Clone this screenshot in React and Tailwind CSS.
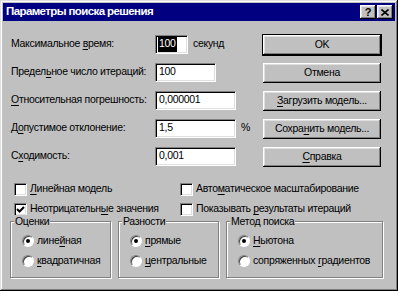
const raised =
  "shadow-[inset_-1px_-1px_0_#000,inset_1px_1px_0_#fff,inset_-2px_-2px_0_#808080,inset_2px_2px_0_#dfdfdf]";
const sunken =
  "border border-t-[#808080] border-l-[#808080] border-b-white border-r-white shadow-[inset_1px_1px_0_#000,inset_-1px_-1px_0_#dfdfdf]";

function U({ children }) {
  return <span className="underline underline-offset-[2px]">{children}</span>;
}

function Field({ label, width, value, selected, suffix }) {
  return (
    <div className="flex items-center h-[28px]">
      <div className="w-[144px]">{label}</div>
      <div className={`h-[19px] bg-white flex items-center px-[2px] ${sunken}`} style={{ width }}>
        <span className={selected ? "bg-black text-white px-[1px]" : "px-[1px]"}>{value}</span>
      </div>
      {suffix && <span className="ml-[5px]">{suffix}</span>}
    </div>
  );
}

function Btn({ children, def }) {
  return (
    <div className={def ? "border border-black" : "border border-transparent"}>
      <div className={`h-[20px] w-[118px] flex items-center justify-center bg-[#c0c0c0] ${raised}`}>
        {children}
      </div>
    </div>
  );
}

function Check({ checked, children }) {
  return (
    <div className="flex items-center h-[20px] gap-[3px]">
      <div className={`w-[13px] h-[13px] bg-white flex items-center justify-center ${sunken}`}>
        {checked && (
          <svg width="9" height="9" viewBox="0 0 9 9">
            <path d="M1 4 L3.5 6.5 L8 2" stroke="#000" strokeWidth="2" fill="none" />
          </svg>
        )}
      </div>
      <span>{children}</span>
    </div>
  );
}

function Radio({ checked, children }) {
  return (
    <div className="flex items-center h-[20px] gap-[3px]">
      <div className="w-[12px] h-[12px] rounded-full bg-white border border-t-[#808080] border-l-[#808080] border-b-white border-r-white shadow-[inset_1px_1px_0_#404040] flex items-center justify-center">
        {checked && <div className="w-[4px] h-[4px] rounded-full bg-black" />}
      </div>
      <span>{children}</span>
    </div>
  );
}

function Group({ title, className, children }) {
  return (
    <fieldset
      className={`border border-[#808080] shadow-[1px_1px_0_#fff,inset_1px_1px_0_#fff] pl-[11px] pt-[3px] pb-[6px] ${className}`}
    >
      <legend className="ml-[-8px] px-[1px] bg-[#c0c0c0] leading-[13px]">{title}</legend>
      {children}
    </fieldset>
  );
}

export default function App() {
  return (
    <div className="w-[398px] h-[291px] bg-[#c0c0c0] p-[3px] shadow-[inset_-1px_-1px_0_#000,inset_1px_1px_0_#dfdfdf,inset_-2px_-2px_0_#808080,inset_2px_2px_0_#fff] font-['Liberation_Sans',Arial,sans-serif] text-[10.5px] tracking-[-0.3px] whitespace-nowrap text-black">
      <div className="h-[18px] bg-[#000080] flex items-center justify-between pl-[3px] pr-[2px]">
        <span className="text-white font-bold text-[11.5px] tracking-[-0.6px]">Параметры поиска решения</span>
        <div className="flex gap-[1px]">
          <div className={`w-[16px] h-[14px] bg-[#c0c0c0] flex items-center justify-center font-bold text-[11px] leading-none ${raised}`}>
            ?
          </div>
          <div className={`w-[16px] h-[14px] bg-[#c0c0c0] flex items-center justify-center ${raised}`}>
            <svg width="8" height="7" viewBox="0 0 8 7">
              <path d="M0.5 0.5 L7.5 6.5 M7.5 0.5 L0.5 6.5" stroke="#000" strokeWidth="1.6" />
            </svg>
          </div>
        </div>
      </div>

      <div className="flex mt-[9px] pl-[8px]">
        <div className="w-[251px]">
          <Field label={<>Максимальное <U>в</U>ремя:</>} width="33px" value="100" selected suffix="секунд" />
          <Field label={<>Предел<U>ь</U>ное число итераций:</>} width="61px" value="100" />
          <Field label={<><U>О</U>тносительная погрешность:</>} width="81px" value="0,000001" />
          <Field label={<>Д<U>о</U>пустимое отклонение:</>} width="81px" value="1,5" suffix="%" />
          <Field label={<>С<U>х</U>одимость:</>} width="81px" value="0,001" />
        </div>
        <div className="flex flex-col gap-[6px] mt-[4px]">
          <Btn def>OK</Btn>
          <Btn>Отмена</Btn>
          <Btn><span><U>З</U>агрузить модель...</span></Btn>
          <Btn><span>Сохра<U>н</U>ить модель...</span></Btn>
          <Btn><span><U>С</U>правка</span></Btn>
        </div>
      </div>

      <div className="grid grid-cols-[166px_1fr] pl-[11px] mt-[9px]">
        <Check><U>Л</U>инейная модель</Check>
        <Check>Авто<U>м</U>атическое масштабирование</Check>
        <Check checked>Неотрицательн<U>ы</U>е значения</Check>
        <Check>Показывать <U>р</U>езультаты итераций</Check>
      </div>

      <div className="flex gap-[7px] pl-[7px] mt-[-4px]">
        <Group title="Оценки" className="w-[101px]">
          <Radio checked>лине<U>й</U>ная</Radio>
          <Radio><U>к</U>вадратичная</Radio>
        </Group>
        <Group title="Разности" className="w-[101px]">
          <Radio checked><U>п</U>рямые</Radio>
          <Radio><U>ц</U>ентральные</Radio>
        </Group>
        <Group title="Метод поиска" className="w-[157px]">
          <Radio checked><U>Н</U>ьютона</Radio>
          <Radio>сопряженных <U>г</U>радиентов</Radio>
        </Group>
      </div>
    </div>
  );
}
